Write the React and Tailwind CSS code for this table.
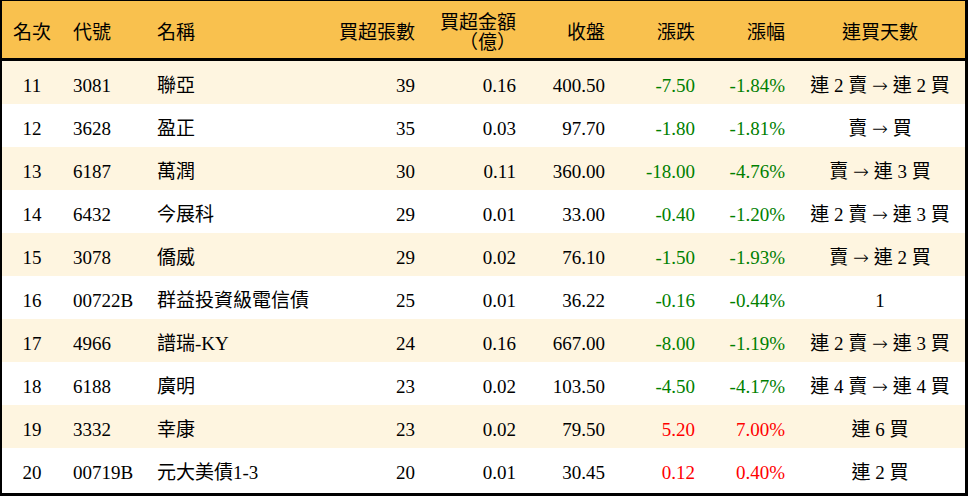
const COLS = 'grid grid-cols-[60px_85px_178px_100px_101px_89px_90px_90px_170px]';

const ROWS = [
  ['11', '3081', '聯亞', '39', '0.16', '400.50', '-7.50', '-1.84%', '連 2 賣 → 連 2 買'],
  ['12', '3628', '盈正', '35', '0.03', '97.70', '-1.80', '-1.81%', '賣 → 買'],
  ['13', '6187', '萬潤', '30', '0.11', '360.00', '-18.00', '-4.76%', '賣 → 連 3 買'],
  ['14', '6432', '今展科', '29', '0.01', '33.00', '-0.40', '-1.20%', '連 2 賣 → 連 3 買'],
  ['15', '3078', '僑威', '29', '0.02', '76.10', '-1.50', '-1.93%', '賣 → 連 2 買'],
  ['16', '00722B', '群益投資級電信債', '25', '0.01', '36.22', '-0.16', '-0.44%', '1'],
  ['17', '4966', '譜瑞-KY', '24', '0.16', '667.00', '-8.00', '-1.19%', '連 2 賣 → 連 3 買'],
  ['18', '6188', '廣明', '23', '0.02', '103.50', '-4.50', '-4.17%', '連 4 賣 → 連 4 買'],
  ['19', '3332', '幸康', '23', '0.02', '79.50', '5.20', '7.00%', '連 6 買'],
  ['20', '00719B', '元大美債1-3', '20', '0.01', '30.45', '0.12', '0.40%', '連 2 買'],
];

// the arrow glyph is drawn from DejaVu so it comes out long and thin
function Streak({ text }) {
  const parts = text.split('→');
  return (
    <>
      {parts.map((p, i) => (
        <span key={i}>
          {i > 0 && <span style={{ fontFamily: '"DejaVu Sans", sans-serif' }} className="font-light">→</span>}
          {p}
        </span>
      ))}
    </>
  );
}

export default function App() {
  return (
    <div
      className="w-[968px] h-[496px] bg-white text-black text-[19px] leading-none border-l-2 border-t border-r-[3px] border-b-[3px] border-black"
      style={{ fontFamily: '"Liberation Serif", "Noto Sans CJK TC", serif' }}
    >
      {/* Header */}
      <div className={`${COLS} h-[60px] pt-[6px] items-center bg-[#f9c14e] border-b-[3px] border-black`}>
        <div className="text-center">名次</div>
        <div className="pl-[11px]">代號</div>
        <div className="pl-[10px]">名稱</div>
        <div className="text-right pr-[10px]">買超張數</div>
        <div className="text-right pr-[10px] leading-[20px]">
          買超金額
          <br />
          （億）
        </div>
        <div className="text-right pr-[10px]">收盤</div>
        <div className="text-right pr-[10px]">漲跌</div>
        <div className="text-right pr-[10px]">漲幅</div>
        <div className="text-center">連買天數</div>
      </div>

      {/* Rows */}
      {ROWS.map((r, i) => {
        const up = !r[6].startsWith('-');
        const tone = up ? 'text-[#ff0000]' : 'text-[#008000]';
        return (
          <div
            key={r[0]}
            className={`${COLS} h-[43px] pt-[6px] items-center ${i % 2 === 0 ? 'bg-[#fef5e0]' : 'bg-white'}`}
          >
            <div className="text-center">{r[0]}</div>
            <div className="pl-[11px]">{r[1]}</div>
            <div className="pl-[10px] whitespace-nowrap">{r[2]}</div>
            <div className="text-right pr-[10px]">{r[3]}</div>
            <div className="text-right pr-[10px]">{r[4]}</div>
            <div className="text-right pr-[10px]">{r[5]}</div>
            <div className={`text-right pr-[10px] ${tone}`}>{r[6]}</div>
            <div className={`text-right pr-[10px] ${tone}`}>{r[7]}</div>
            <div className="text-center whitespace-nowrap">
              <Streak text={r[8]} />
            </div>
          </div>
        );
      })}
    </div>
  );
}
